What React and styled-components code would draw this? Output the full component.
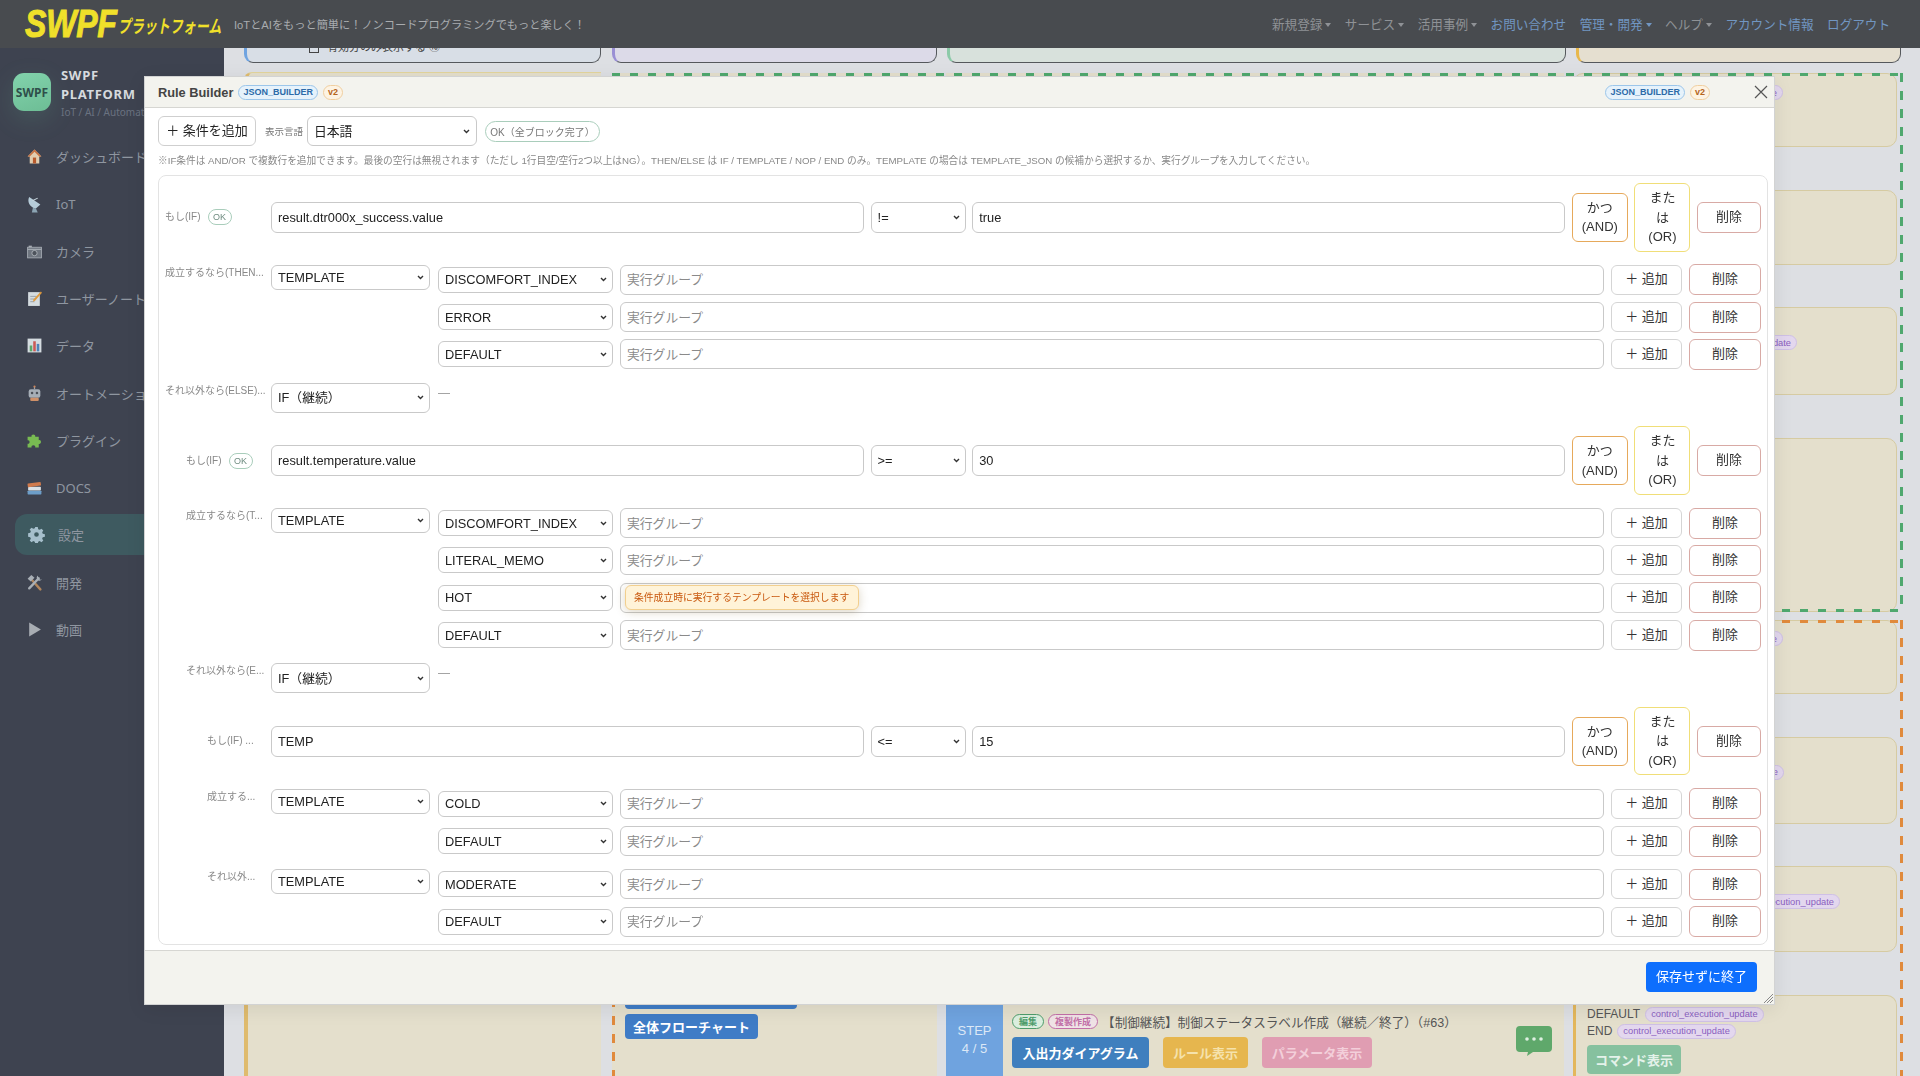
import React from "react";
import styled, { createGlobalStyle, css } from "styled-components";

const FONT = `"Liberation Sans", "Noto Sans CJK JP", sans-serif`;
const SIDE_FONT = `"Noto Sans", "Noto Sans CJK JP", sans-serif`;

const Global = createGlobalStyle`
  html, body { margin: 0; padding: 0; height: 100%; overflow: hidden; }
  body { font-family: ${FONT}; color: #222; background: #dddfe3; }
  #root { height: 100%; }
  * { box-sizing: border-box; }
`;

const Page = styled.div`
  height: 1076px;
  display: flex;
  flex-direction: column;
  overflow: hidden;
`;

/* ---------- navbar ---------- */
const Navbar = styled.header`
  height: 48px;
  flex: none;
  background: #484b4f;
  display: flex;
  align-items: center;
  padding: 0 30px 0 25px;
  position: relative;
  z-index: 3;
`;
const Logo = styled.div`
  width: 209px;
  flex: none;
  display: flex;
  align-items: center;
  color: #f0e02a;
  font-weight: 700;
  font-style: italic;
`;
const LogoMain = styled.span`
  font-size: 32px;
  display: inline-block;
  transform: scaleY(1.22);
  -webkit-text-stroke: 0.8px #f0e02a;
  letter-spacing: -0.2px;
  line-height: 1;
`;
const LogoSub = styled.span`
  font-size: 13px;
  font-family: "Noto Sans CJK JP", sans-serif;
  font-weight: 700;
  margin-left: 1px;
  margin-top: 3px;
  white-space: nowrap;
  transform: scaleY(1.4);
`;
const Tagline = styled.div`
  font-size: 11.2px;
  color: #a9acaf;
  white-space: nowrap;
  flex: 1;
`;
const NavLinks = styled.nav`
  display: flex;
  gap: 13.5px;
  align-items: center;
  margin-top: -1px;
`;
const NavLink = styled.span`
  font-size: 12.6px;
  color: ${(p) => (p.$blue ? "#7196c2" : "#8f9296")};
  display: flex;
  align-items: center;
  white-space: nowrap;
`;
const Caret = styled.i`
  width: 0;
  height: 0;
  margin-left: 3px;
  margin-top: 2px;
  border-left: 3px solid transparent;
  border-right: 3px solid transparent;
  border-top: 4px solid currentColor;
`;

/* ---------- shell ---------- */
const Shell = styled.div`
  flex: 1;
  display: flex;
  min-height: 0;
`;
const Sidebar = styled.aside`
  width: 224px;
  flex: none;
  background: #3e4350;
  color: #8f96a0;
  font-family: ${SIDE_FONT};
  overflow: hidden;
`;
const Brand = styled.div`
  display: flex;
  gap: 10px;
  height: 88.3px;
  padding: 25px 0 0 13px;
`;
const BrandTile = styled.div`
  width: 38px;
  height: 38px;
  border-radius: 11px;
  background: linear-gradient(160deg, #82d3ac, #6dbd95);
  box-shadow: 0 8px 26px rgba(110, 200, 160, 0.16);
  color: #2f4f4a;
  font-size: 12px;
  font-weight: 700;
  display: flex;
  align-items: center;
  justify-content: center;
  flex: none;
`;
const BrandText = styled.div`
  margin-top: -7px;
`;
const BrandTitle = styled.div`
  font-size: 13px;
  line-height: 19px;
  font-weight: 700;
  letter-spacing: 0.7px;
  color: #d6dade;
`;
const BrandSub = styled.div`
  font-size: 10px;
  line-height: 16px;
  color: #6a7280;
  white-space: nowrap;
`;
const SideList = styled.div`
  display: flex;
  flex-direction: column;
  gap: 6.25px;
`;
const SideItem = styled.div`
  height: 41px;
  flex: none;
  margin-left: 15px;
  display: flex;
  align-items: center;
  gap: 13px;
  padding-left: ${(p) => (p.$active ? 13 : 11)}px;
  border-radius: 12px 0 0 12px;
  background: ${(p) => (p.$active ? "#3e5a60" : "transparent")};
  font-size: 13px;
  white-space: nowrap;
  svg { flex: none; }
`;

/* ---------- background board ---------- */
const Main = styled.main`
  flex: 1;
  min-width: 0;
  background: #dddfe3;
  padding: 0 19px 0 20px;
  overflow: hidden;
`;
const TopRow = styled.div`
  height: 15px;
  display: grid;
  grid-template-columns: 357px 325px 618px 324px;
  column-gap: 11px;
  & > :nth-child(n + 3) { margin-left: -1px; }
`;
const TopCard = styled.div`
  background: ${(p) => p.$bg};
  border-left: 3px solid ${(p) => p.$edge};
  border-bottom: 1px solid #55585c;
  border-right: 1px solid #55585c;
  border-radius: 0 0 9px 9px;
  display: flex;
  align-items: flex-start;
  padding-left: 62px;
  overflow: hidden;
`;
const ClippedCheck = styled.span`
  font-size: 11px;
  line-height: 14px;
  margin-top: -8px;
  color: #444;
  white-space: nowrap;
  display: flex;
  gap: 8px;
  align-items: center;
`;
const CheckBox = styled.i`
  width: 10px;
  height: 11px;
  border: 1px solid #444;
  display: block;
`;
const Board = styled.div`
  margin-top: 9px;
  display: flex;
  gap: 11px;
  height: 1100px;
`;
const LeftCard = styled.div`
  width: 357px;
  flex: none;
  background: #e4dfcc;
  border-top: 1px solid #e3d59c;
  border-left: 4px solid #dfbb6e;
  border-radius: 8px 0 0 0;
`;
const Groups = styled.div`
  flex: 1;
  min-width: 0;
  margin-top: 1px;
  margin-right: -2px;
  display: flex;
  flex-direction: column;
  gap: 8px;
`;
const dashes = (c) => css`
  background-image:
    linear-gradient(90deg, ${c} 8px, transparent 8px),
    linear-gradient(90deg, ${c} 8px, transparent 8px),
    linear-gradient(180deg, ${c} 9px, transparent 9px),
    linear-gradient(180deg, ${c} 9px, transparent 9px);
  background-size: 18px 3px, 18px 3px, 3px 18px, 3px 18px;
  background-position: left top, left bottom, left top, right top;
  background-repeat: repeat-x, repeat-x, repeat-y, repeat-y;
`;
const Group = styled.section`
  flex: none;
  height: ${(p) => p.$h}px;
  display: grid;
  grid-template-columns: 325px 618px 324px;
  column-gap: 9px;
  padding-right: 2px;
  position: relative;
  &::after {
    content: "";
    position: absolute;
    inset: 0;
    pointer-events: none;
    ${(p) => dashes(p.$color)}
  }
`;
const Column = styled.div`
  background: #e4dfcc;
  padding: ${(p) => p.$pad || "0"};
  display: flex;
  flex-direction: column;
  align-items: flex-start;
  min-width: 0;
`;
const BlankColumn = styled.div`
  display: flex;
  flex-direction: column;
`;
const FlowBtn = styled.div`
  width: ${(p) => p.$w}px;
  height: ${(p) => p.$ht}px;
  margin-bottom: 5px;
  background: #3f7cc6;
  color: #fff;
  font-size: 13px;
  font-weight: 700;
  border-radius: 4px;
  display: flex;
  align-items: center;
  justify-content: center;
`;
const StepCard = styled.div`
  margin-top: 384px;
  height: 90px;
  background: #e4dfcc;
  display: flex;
`;
const StepBlock = styled.div`
  width: 57px;
  height: 72px;
  background: #6fa3df;
  color: #dce8f6;
  font-size: 13px;
  line-height: 18px;
  flex: none;
  display: flex;
  align-items: center;
  justify-content: center;
  text-align: center;
`;
const StepBody = styled.div`
  flex: 1;
  padding: 9px 9px 0;
  display: flex;
  flex-direction: column;
  gap: 8px;
`;
const StepHead = styled.div`
  display: flex;
  align-items: center;
  gap: 4px;
  font-size: 12.6px;
  color: #555;
  white-space: nowrap;
  height: 16px;
`;
const MiniTag = styled.span`
  height: 15px;
  padding: 0 ${(p) => p.$pad}px;
  border-radius: 8px;
  border: 1px solid ${(p) => p.$line};
  background: ${(p) => p.$bg};
  color: ${(p) => p.$line};
  font-size: 9px;
  font-weight: 700;
  display: flex;
  align-items: center;
`;
const StepActions = styled.div`
  display: flex;
  align-items: center;
  gap: 14px;
  position: relative;
`;
const StepBtn = styled.div`
  width: ${(p) => p.$w}px;
  height: 31px;
  border-radius: 4px;
  background: ${(p) => p.$bg};
  color: ${(p) => p.$fg};
  font-size: 13px;
  font-weight: 700;
  display: flex;
  align-items: center;
  justify-content: center;
`;
const ChatBubble = styled.svg`
  position: absolute;
  left: 504px;
  top: -11px;
`;
const Stack = styled.div`
  display: flex;
  flex-direction: column;
  gap: 42.7px;
`;
const InfoCard = styled.div`
  height: ${(p) => p.$h}px;
  flex: none;
  background: #e4dfcc;
  border: 1px solid #d6cba2;
  border-left: ${(p) => (p.$edge ? "3px solid #e3b75c" : "1px solid #d6cba2")};
  border-radius: 10px;
  padding: ${(p) => p.$pad || "0"};
  display: flex;
  flex-direction: column;
`;
const TagRow = styled.div`
  display: flex;
  justify-content: flex-end;
  padding-top: ${(p) => p.$top}px;
  padding-right: ${(p) => 1899 - p.$end}px;
`;
const LineTag = styled.div`
  display: flex;
  align-items: center;
  gap: 5px;
  font-size: 12px;
  color: #555;
  height: 16px;
  margin-bottom: 1px;
`;
const Pill = styled.span`
  height: 15px;
  padding: 0 5px;
  border-radius: 8px;
  background: #e3d7ee;
  border: 1px solid #cfc0e6;
  color: #8a5fc0;
  font-size: 9.3px;
  white-space: nowrap;
  display: flex;
  align-items: center;
  flex: none;
`;
const CommandBtn = styled.div`
  width: 94px;
  height: 29px;
  margin-top: 5px;
  border-radius: 4px;
  background: #86c19f;
  color: #e4f2ea;
  font-size: 13px;
  font-weight: 700;
  display: flex;
  align-items: center;
  justify-content: center;
`;

/* ---------- modal ---------- */
const chevron = `url("data:image/svg+xml,%3Csvg xmlns='http://www.w3.org/2000/svg' width='7' height='5' viewBox='0 0 7 5'%3E%3Cpath d='M1 1l2.5 2.5L6 1' fill='none' stroke='%23333' stroke-width='1.4'/%3E%3C/svg%3E")`;
const selectBase = css`
  appearance: none;
  -webkit-appearance: none;
  padding: 0 14px 0 6px;
  background: #fff ${chevron} no-repeat right 5px center;
  border: 1px solid #c9c9c9;
  border-radius: 6px;
  font: 12.8px ${FONT};
  color: #222;
`;
const Modal = styled.div`
  position: fixed;
  left: 144px;
  top: 76px;
  width: 1631px;
  height: 929px;
  background: #fff;
  border: 1px solid #d2d3d3;
  box-shadow: 0 4px 18px rgba(0, 0, 0, 0.08);
  display: flex;
  flex-direction: column;
  z-index: 5;
`;
const ModalHead = styled.div`
  height: 31px;
  flex: none;
  background: #f3f3ee;
  border-bottom: 1px solid #d6d6d2;
  display: flex;
  align-items: center;
  padding: 0 6px 0 13px;
  gap: 5px;
`;
const ModalTitle = styled.div`
  font-size: 12.8px;
  font-weight: 700;
  color: #444;
`;
const Badge = styled.span`
  height: 15px;
  padding: 0 ${(p) => p.$pad}px;
  border-radius: 8px;
  border: 1px solid ${(p) => p.$line};
  background: ${(p) => p.$bg};
  color: ${(p) => p.$fg};
  font-size: 9px;
  font-weight: 700;
  display: flex;
  align-items: center;
  white-space: nowrap;
`;
const Spacer = styled.div`
  flex: 1;
`;
const CloseIcon = styled.svg`
  margin-left: 39px;
`;
const ModalBody = styled.div`
  flex: 1;
  min-height: 0;
  padding: 8px 6px 6px 13px;
  display: flex;
  flex-direction: column;
`;
const Toolbar = styled.div`
  height: 30px;
  display: flex;
  align-items: center;
  flex: none;
`;
const ToolBtn = styled.button`
  width: 98px;
  height: 30px;
  padding: 0 0 2px;
  background: #fff;
  border: 1px solid #cfcfcf;
  border-radius: 6px;
  font: 13px/1 ${FONT};
  color: #222;
  margin-right: 9px;
`;
const ToolLabel = styled.span`
  font-size: 9.5px;
  color: #777;
  margin-right: 4px;
  white-space: nowrap;
`;
const LangSelect = styled.select`
  ${selectBase}
  width: 170px;
  height: 30px;
  margin-right: 8px;
  background-position: right 6px center;
`;
const OkAll = styled.span`
  width: 115px;
  height: 21px;
  border: 1px solid #a9cdbb;
  border-radius: 11px;
  color: #777;
  font-size: 10px;
  display: flex;
  align-items: center;
  justify-content: center;
  white-space: nowrap;
`;
const Hint = styled.div`
  font-size: 9.7px;
  line-height: 14px;
  color: #888;
  margin: 8px 0 7px;
  white-space: nowrap;
  flex: none;
`;
const RuleBox = styled.div`
  height: 770px;
  flex: none;
  border: 1px solid #e3e3e3;
  border-radius: 8px;
  padding: 7px 6px;
  display: flex;
  flex-direction: column;
  gap: 13.4px;
  position: relative;
`;
const Row = styled.div`
  display: grid;
  grid-template-columns: 106px 1fr;
  align-items: ${(p) => (p.$center ? "center" : "start")};
`;
const RowLabel = styled.div`
  padding-left: ${(p) => p.$indent}px;
  padding-top: ${(p) => (p.$center ? 0 : 1)}px;
  font-size: 10px;
  line-height: 14px;
  color: #888;
  white-space: nowrap;
  overflow: hidden;
  display: flex;
  align-items: center;
  gap: 7px;
`;
const OkTag = styled.span`
  width: 24px;
  height: 16px;
  border: 1px solid #a9cdbb;
  border-radius: 8px;
  font-size: 9px;
  color: #6f8c80;
  display: flex;
  align-items: center;
  justify-content: center;
  flex: none;
`;
const IfLine = styled.div`
  display: flex;
  align-items: center;
  gap: 6.6px;
  min-height: 68.4px;
`;
const TextField = styled.input`
  flex: 1;
  min-width: 0;
  height: ${(p) => p.$h || 31}px;
  padding: 0 6px;
  background: #fff;
  border: 1px solid #c9c9c9;
  border-radius: 6px;
  font: 12.8px ${FONT};
  color: #222;
  &::placeholder { color: #8a8a8a; opacity: 1; }
`;
const OpSelect = styled.select`
  ${selectBase}
  width: 95px;
  flex: none;
  height: 31px;
`;
const LogicBtn = styled.button`
  width: 56px;
  flex: none;
  padding: 4px 8px;
  background: #fff;
  border: 1px solid ${(p) => p.$line};
  border-radius: 6px;
  font: 13px/19.5px ${FONT};
  color: #333;
`;
const DelBtn = styled.button`
  width: ${(p) => p.$w}px;
  flex: none;
  height: 31px;
  padding: 0 0 2px;
  background: #fff;
  border: 1px solid #d8aaa5;
  border-radius: 6px;
  font: 13px/1 ${FONT};
  color: #333;
`;
const AddBtn = styled.button`
  width: 71px;
  flex: none;
  height: 30px;
  padding: 0 0 2px;
  background: #fff;
  border: 1px solid #d5d5d5;
  border-radius: 6px;
  font: 13px/1 ${FONT};
  color: #333;
`;
const BranchBody = styled.div`
  display: flex;
  align-items: flex-start;
  gap: 8px;
`;
const TypeSelect = styled.select`
  ${selectBase}
  width: 159px;
  flex: none;
  height: ${(p) => (p.$tall ? 30 : 25)}px;
`;
const Lines = styled.div`
  flex: 1;
  min-width: 0;
  display: flex;
  flex-direction: column;
  gap: 7.3px;
`;
const Line = styled.div`
  display: flex;
  align-items: center;
  gap: 7px;
  height: 30px;
`;
const LineSelect = styled.select`
  ${selectBase}
  width: 175px;
  flex: none;
  height: 26px;
`;
const FieldWrap = styled.div`
  flex: 1;
  min-width: 0;
  display: flex;
  position: relative;
`;
const Tooltip = styled.div`
  position: absolute;
  left: 5px;
  top: 2px;
  width: 234px;
  height: 25px;
  padding-left: 8px;
  background: #fff3d8;
  border: 1px solid #f2cf8e;
  border-radius: 6px;
  box-shadow: 0 2px 10px rgba(120, 90, 30, 0.25);
  color: #c9590f;
  font-size: 9.8px;
  display: flex;
  align-items: center;
  white-space: nowrap;
`;
const Dash = styled.span`
  margin-top: 3px;
  font-size: 12px;
  color: #999;
`;
const ModalFoot = styled.div`
  height: 54px;
  flex: none;
  background: #f3f3ee;
  border-top: 1px solid #d6d6d2;
  padding: 11px 17px 0 0;
  display: flex;
  justify-content: flex-end;
`;
const SaveBtn = styled.button`
  width: 111px;
  height: 30px;
  padding: 0 0 2px;
  background: #0d6efd;
  border: none;
  border-radius: 4px;
  font: 13px/1 ${FONT};
  color: #fff;
`;
const Grip = styled.svg`
  position: absolute;
  right: 0;
  bottom: 0;
`;

/* ---------- icons ---------- */
const icons = {
  house: (
    <>
      <path d="M8 1.5 1.5 8h2v6.5h9V8h2z" fill="#e0cdb0" />
      <path d="M8 1.5 1.5 8h2L8 3.5 12.5 8h2z" fill="#c9713f" />
      <rect x="6.5" y="9" width="3" height="5.5" fill="#b85a2c" />
    </>
  ),
  dish: (
    <>
      <path d="M3 1c-2.2 4.2.4 9.6 6 11l4.5-4z" fill="#b6ccd9" />
      <path d="M6 4.5 11 2" stroke="#c8d6de" strokeWidth="1" />
      <path d="M6.5 11 5.5 15.5h5.5L9.5 12z" fill="#8ca5b4" />
    </>
  ),
  camera: (
    <>
      <rect x="1.5" y="4" width="13" height="10" fill="#6f7680" stroke="#a8aeb5" strokeWidth=".8" />
      <rect x="2.5" y="2.5" width="3" height="1.5" fill="#a8aeb5" />
      <rect x="1.5" y="5.5" width="13" height="1" fill="#a8aeb5" />
      <circle cx="8" cy="9.5" r="2.5" fill="#4d535c" stroke="#b2b8be" strokeWidth=".8" />
    </>
  ),
  memo: (
    <>
      <rect x="2" y="2" width="11" height="13" fill="#d5dce0" />
      <path d="M4 6h6M4 8.5h5M4 11h4" stroke="#8f99a3" strokeWidth=".8" />
      <path d="m14 1.5 1 1.2L8.5 10l-2 1 .7-2.2z" fill="#e09a3c" />
    </>
  ),
  chart: (
    <>
      <rect x="1.5" y="1.5" width="13" height="13" fill="#d5dce0" />
      <rect x="3.5" y="8" width="2.4" height="5.5" fill="#5da86a" />
      <rect x="6.8" y="4" width="2.4" height="9.5" fill="#cc5a55" />
      <rect x="10.1" y="6.5" width="2.4" height="7" fill="#4e83b8" />
    </>
  ),
  robot: (
    <>
      <rect x="7.4" y="1" width="1.2" height="3" fill="#9aa2aa" />
      <circle cx="8" cy="1.5" r="1" fill="#d08659" />
      <rect x="2.5" y="4" width="11" height="8" rx="2" fill="#a6aeb6" />
      <circle cx="5.7" cy="7.5" r="1.2" fill="#4b5058" />
      <circle cx="10.3" cy="7.5" r="1.2" fill="#4b5058" />
      <rect x="4" y="12" width="8" height="3" rx="1" fill="#cf9068" />
    </>
  ),
  puzzle: (
    <path
      d="M1.5 4.5h3.7c-.7-2.8 4.1-2.8 3.5 0H12v3.2c2.8-.7 2.8 4.1 0 3.5v3.3H8.7c.7-2.8-4.1-2.8-3.5 0H1.5v-3.5c2.5.8 2.5-4 0-3.2z"
      fill="#78bb52"
    />
  ),
  books: (
    <>
      <rect x="1.5" y="11" width="13" height="3.5" rx=".6" fill="#6d9ec9" />
      <rect x="2" y="7.3" width="12" height="3.5" rx=".6" fill="#dbe1e5" />
      <rect x="1.5" y="3.5" width="12.5" height="3.5" rx=".6" fill="#d07a4c" transform="rotate(-8 8 5)" />
    </>
  ),
  gear: (
    <path
      fillRule="evenodd"
      d="M6.8 1h2.4l.4 2 1.4.6 1.7-1.1 1.7 1.7-1.1 1.7.6 1.4 2 .4v2.4l-2 .4-.6 1.4 1.1 1.7-1.7 1.7-1.7-1.1-1.4.6-.4 2H6.8l-.4-2-1.4-.6-1.7 1.1-1.7-1.7 1.1-1.7-.6-1.4-2-.4V6.8l2-.4.6-1.4-1.1-1.7 1.7-1.7 1.7 1.1 1.4-.6zM8 5.8a2.2 2.2 0 1 0 0 4.4 2.2 2.2 0 0 0 0-4.4z"
      fill="#a6bfcc"
    />
  ),
  tools: (
    <>
      <path d="M4.5 4.5 13.5 14.5" stroke="#b0855c" strokeWidth="2.2" strokeLinecap="round" />
      <path d="M1.5 4.5 5 1l3 2.5L4.5 7z" fill="#a8afb6" />
      <path d="M12 4 3 13.5" stroke="#a8afb6" strokeWidth="2.2" strokeLinecap="round" />
      <path d="M11 1.5a3 3 0 0 0-.6 3.5l1.2 1.2A3 3 0 0 0 15 5l-1.8 .3-1.2-1.3z" fill="#a8afb6" />
    </>
  ),
  play: <path d="M3 1.5v13l11-6.5z" fill="#a8adb3" />,
};
const SideIcon = ({ name }) => (
  <svg width="17" height="17" viewBox="0 0 16 16" aria-hidden="true">
    {icons[name]}
  </svg>
);

/* ---------- data ---------- */
const sideItems = [
  ["house", "ダッシュボード"],
  ["dish", "IoT"],
  ["camera", "カメラ"],
  ["memo", "ユーザーノート"],
  ["chart", "データ"],
  ["robot", "オートメーション"],
  ["puzzle", "プラグイン"],
  ["books", "DOCS"],
  ["gear", "設定", true],
  ["tools", "開発"],
  ["play", "動画"],
];
const navItems = [
  ["新規登録", false, true],
  ["サービス", false, true],
  ["活用事例", false, true],
  ["お問い合わせ", true, false],
  ["管理・開発", true, true],
  ["ヘルプ", false, true],
  ["アカウント情報", true, false],
  ["ログアウト", true, false],
];
const rules = [
  {
    indent: 0,
    ifLabel: "もし(IF)",
    ok: true,
    left: "result.dtr000x_success.value",
    op: "!=",
    value: "true",
    thenLabel: "成立するなら(THEN...",
    thenRows: [{ v: "DISCOMFORT_INDEX" }, { v: "ERROR" }, { v: "DEFAULT" }],
    elseLabel: "それ以外なら(ELSE)...",
    elseType: "IF（継続）",
    elseRows: [],
  },
  {
    indent: 21,
    ifLabel: "もし(IF)",
    ok: true,
    left: "result.temperature.value",
    op: ">=",
    value: "30",
    thenLabel: "成立するなら(T...",
    thenRows: [{ v: "DISCOMFORT_INDEX" }, { v: "LITERAL_MEMO" }, { v: "HOT", tip: true }, { v: "DEFAULT" }],
    elseLabel: "それ以外なら(E...",
    elseType: "IF（継続）",
    elseRows: [],
  },
  {
    indent: 42,
    ifLabel: "もし(IF) ...",
    ok: false,
    left: "TEMP",
    op: "<=",
    value: "15",
    thenLabel: "成立する...",
    thenRows: [{ v: "COLD" }, { v: "DEFAULT" }],
    elseLabel: "それ以外...",
    elseType: "TEMPLATE",
    elseRows: [{ v: "MODERATE" }, { v: "DEFAULT" }],
  },
];

const One = ({ as: Comp, value, ...rest }) => (
  <Comp defaultValue={value} {...rest}>
    <option value={value}>{value}</option>
  </Comp>
);

const LineRows = ({ rows }) => (
  <Lines>
    {rows.map((r, i) => (
      <Line key={i}>
        <One as={LineSelect} value={r.v} />
        <FieldWrap>
          <TextField $h={30} placeholder="実行グループ" />
          {r.tip && <Tooltip>条件成立時に実行するテンプレートを選択します</Tooltip>}
        </FieldWrap>
        <AddBtn>＋ 追加</AddBtn>
        <DelBtn $w={72}>削除</DelBtn>
      </Line>
    ))}
  </Lines>
);

const Rule = ({ r }) => (
  <>
    <Row $center>
      <RowLabel $indent={r.indent} $center>
        {r.ifLabel}
        {r.ok && <OkTag>OK</OkTag>}
      </RowLabel>
      <IfLine>
        <TextField defaultValue={r.left} />
        <One as={OpSelect} value={r.op} />
        <TextField defaultValue={r.value} />
        <LogicBtn $line="#e6a95b">かつ(AND)</LogicBtn>
        <LogicBtn $line="#f0de78">または(OR)</LogicBtn>
        <DelBtn $w={64}>削除</DelBtn>
      </IfLine>
    </Row>
    <Row>
      <RowLabel $indent={r.indent}>{r.thenLabel}</RowLabel>
      <BranchBody>
        <One as={TypeSelect} value="TEMPLATE" />
        <LineRows rows={r.thenRows} />
      </BranchBody>
    </Row>
    <Row>
      <RowLabel $indent={r.indent}>{r.elseLabel}</RowLabel>
      <BranchBody>
        <One as={TypeSelect} value={r.elseType} $tall={r.elseRows.length === 0} />
        {r.elseRows.length ? <LineRows rows={r.elseRows} /> : <Dash>—</Dash>}
      </BranchBody>
    </Row>
  </>
);

const Tags = () => (
  <>
    <Badge $pad={4} $line="#9cc6ea" $bg="#e6f2fb" $fg="#2c6aa8">JSON_BUILDER</Badge>
    <Badge $pad={4} $line="#f0cfa0" $bg="#fdf3e3" $fg="#b5651d">v2</Badge>
  </>
);

const Tail = ({ top, end }) => (
  <TagRow $top={top} $end={end}>
    <Pill>control_execution_update</Pill>
  </TagRow>
);

export default function App() {
  return (
    <Page>
      <Global />
      <Navbar>
        <Logo>
          <LogoMain>SWPF</LogoMain>
          <LogoSub>プラットフォーム</LogoSub>
        </Logo>
        <Tagline>IoTとAIをもっと簡単に！ノンコードプログラミングでもっと楽しく！</Tagline>
        <NavLinks>
          {navItems.map(([t, blue, caret]) => (
            <NavLink key={t} $blue={blue}>
              {t}
              {caret && <Caret />}
            </NavLink>
          ))}
        </NavLinks>
      </Navbar>
      <Shell>
        <Sidebar>
          <Brand>
            <BrandTile>SWPF</BrandTile>
            <BrandText>
              <BrandTitle>SWPF</BrandTitle>
              <BrandTitle>PLATFORM</BrandTitle>
              <BrandSub>IoT / AI / Automation</BrandSub>
            </BrandText>
          </Brand>
          <SideList>
            {sideItems.map(([icon, label, active]) => (
              <SideItem key={label} $active={active}>
                <SideIcon name={icon} />
                {label}
              </SideItem>
            ))}
          </SideList>
        </Sidebar>
        <Main>
          <TopRow>
            <TopCard $bg="#d8dee6" $edge="#6fa3e0">
              <ClippedCheck>
                <CheckBox />
                有効分のみ表示する ⑩
              </ClippedCheck>
            </TopCard>
            <TopCard $bg="#dcdae8" $edge="#9a8fd4" />
            <TopCard $bg="#d8e1dc" $edge="#8ccaa8" />
            <TopCard $bg="#e5dfd0" $edge="#e8b84c" />
          </TopRow>
          <Board>
            <LeftCard />
            <Groups>
              <Group $h={539} $color="#4fa86e">
                <Column />
                <Column />
                <Stack>
                  <InfoCard $h={74}><Tail top={11} end={1786} /></InfoCard>
                  <InfoCard $h={75} />
                  <InfoCard $h={88}><Tail top={27} end={1800} /></InfoCard>
                  <InfoCard $h={174} />
                </Stack>
              </Group>
              <Group $h={520} $color="#e08a3c">
                <Column $pad="365px 0 0 13px">
                  <FlowBtn $w={172} $ht={24} />
                  <FlowBtn $w={133} $ht={25}>全体フローチャート</FlowBtn>
                </Column>
                <BlankColumn>
                  <StepCard>
                    <StepBlock>STEP<br />4 / 5</StepBlock>
                    <StepBody>
                      <StepHead>
                        <MiniTag $pad={6} $line="#4f9d6c" $bg="#dcefdf">編集</MiniTag>
                        <MiniTag $pad={6} $line="#c26fa8" $bg="#f0e3e6">複製作成</MiniTag>
                        【制御継続】制御ステータスラベル作成（継続／終了）（#63）
                      </StepHead>
                      <StepActions>
                        <StepBtn $w={137} $bg="#3f7fbe" $fg="#fff">入出力ダイアグラム</StepBtn>
                        <StepBtn $w={85} $bg="#e6b64e" $fg="#f5e2ac">ルール表示</StepBtn>
                        <StepBtn $w={110} $bg="#e09db2" $fg="#f3cfda">パラメータ表示</StepBtn>
                        <ChatBubble width="36" height="30" viewBox="0 0 36 30" aria-hidden="true">
                          <path d="M4 0h28a4 4 0 0 1 4 4v18a4 4 0 0 1-4 4H17l-6 4 1-4H4a4 4 0 0 1-4-4V4a4 4 0 0 1 4-4z" fill="#5fa86b" />
                          <circle cx="11" cy="13" r="1.8" fill="#dff0e2" />
                          <circle cx="18" cy="13" r="1.8" fill="#dff0e2" />
                          <circle cx="25" cy="13" r="1.8" fill="#dff0e2" />
                        </ChatBubble>
                      </StepActions>
                    </StepBody>
                  </StepCard>
                </BlankColumn>
                <Stack>
                  <InfoCard $h={74}><Tail top={10} end={1786} /></InfoCard>
                  <InfoCard $h={87}><Tail top={27} end={1787} /></InfoCard>
                  <InfoCard $h={86}><Tail top={27} end={1843} /></InfoCard>
                  <InfoCard $h={100} $edge $pad="10px 0 0 11px">
                    <LineTag>DEFAULT <Pill>control_execution_update</Pill></LineTag>
                    <LineTag>END <Pill>control_execution_update</Pill></LineTag>
                    <CommandBtn>コマンド表示</CommandBtn>
                  </InfoCard>
                </Stack>
              </Group>
            </Groups>
          </Board>
        </Main>
      </Shell>
      <Modal>
        <ModalHead>
          <ModalTitle>Rule Builder</ModalTitle>
          <Tags />
          <Spacer />
          <Tags />
          <CloseIcon width="14" height="14" viewBox="0 0 14 14" aria-hidden="true">
            <path d="M1 1l12 12M13 1 1 13" stroke="#555" strokeWidth="1.2" fill="none" />
          </CloseIcon>
        </ModalHead>
        <ModalBody>
          <Toolbar>
            <ToolBtn>＋ 条件を追加</ToolBtn>
            <ToolLabel>表示言語</ToolLabel>
            <One as={LangSelect} value="日本語" />
            <OkAll>OK（全ブロック完了）</OkAll>
          </Toolbar>
          <Hint>
            ※IF条件は AND/OR で複数行を追加できます。最後の空行は無視されます（ただし 1行目空/空行2つ以上はNG）。THEN/ELSE は IF / TEMPLATE / NOP / END のみ。TEMPLATE の場合は TEMPLATE_JSON の候補から選択するか、実行グループを入力してください。
          </Hint>
          <RuleBox>
            {rules.map((r, i) => (
              <Rule key={i} r={r} />
            ))}
          </RuleBox>
        </ModalBody>
        <ModalFoot>
          <SaveBtn>保存せずに終了</SaveBtn>
        </ModalFoot>
        <Grip width="11" height="11" viewBox="0 0 11 11" aria-hidden="true">
          <path d="M1 10 10 1M4 10l6-6M7 10l3-3" stroke="#888" strokeWidth="1" fill="none" />
        </Grip>
      </Modal>
    </Page>
  );
}
